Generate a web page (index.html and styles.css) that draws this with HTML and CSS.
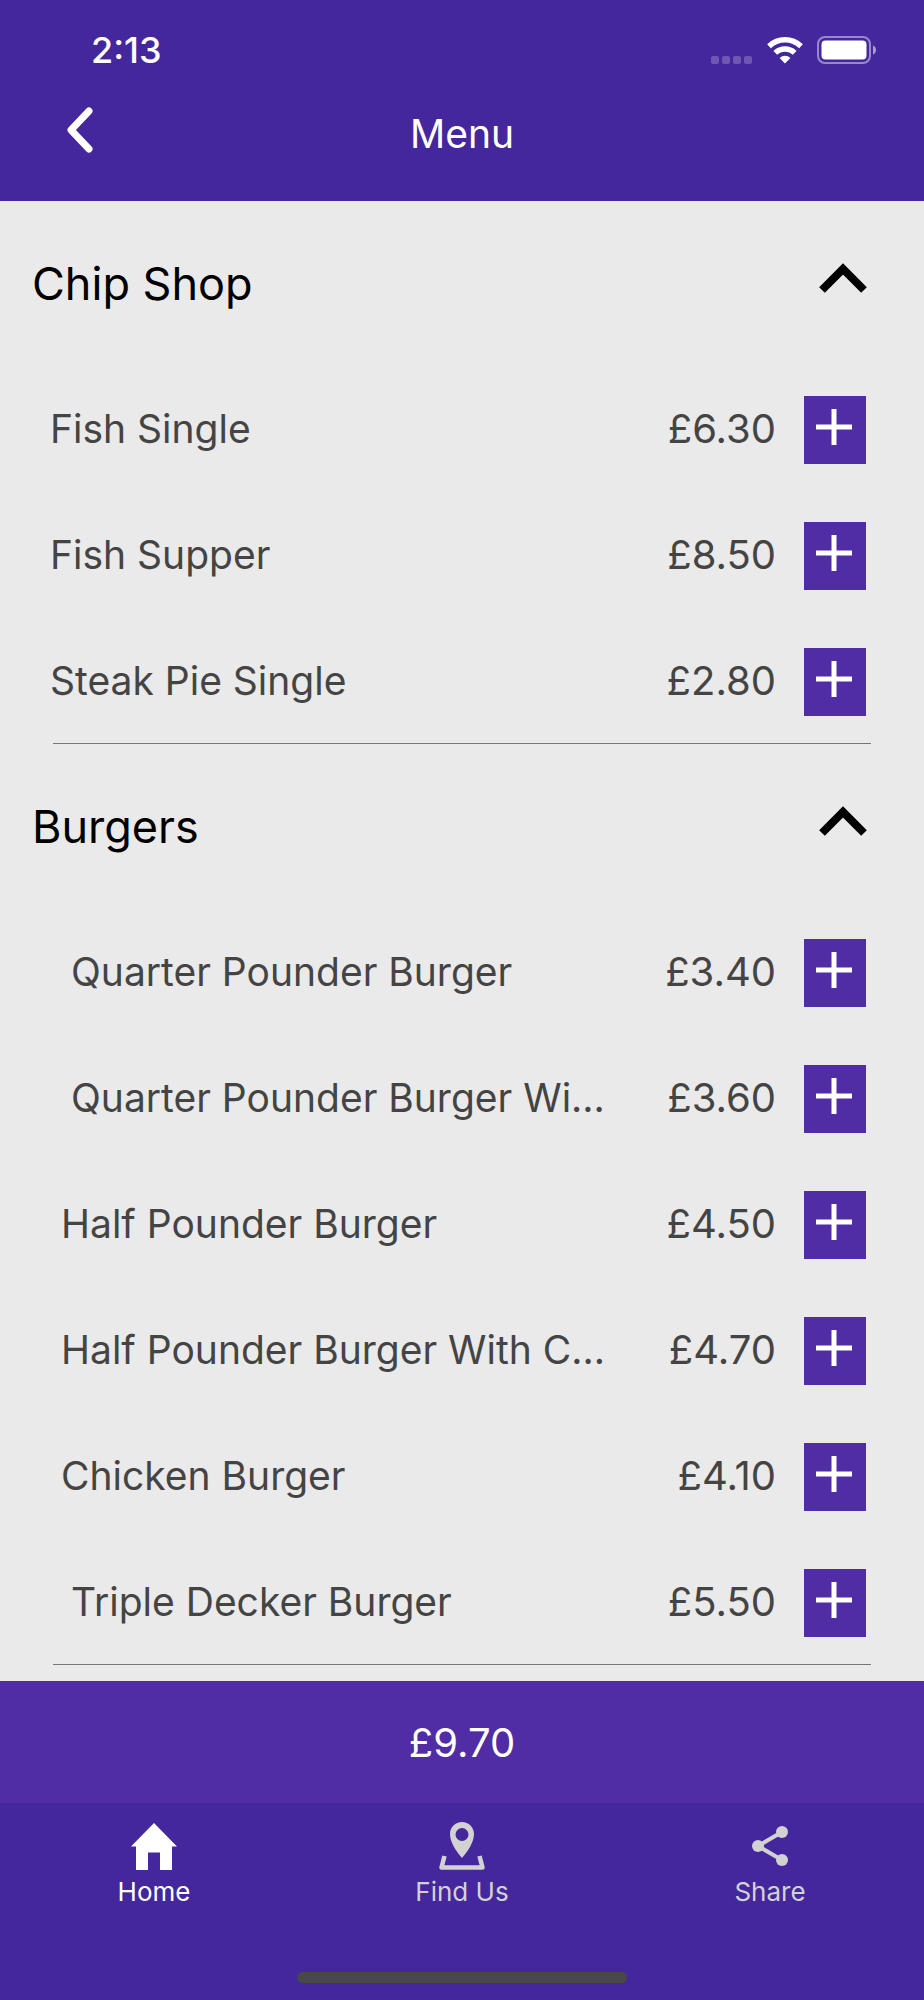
FILE: index.html
```html
<!DOCTYPE html>
<html lang="en">
<head>
<meta charset="utf-8">
<meta name="viewport" content="width=device-width, initial-scale=1">
<title>Menu</title>
<link rel="stylesheet" href="styles.css">
</head>
<body>
<svg class="sprite" aria-hidden="true">
  <symbol id="plus" viewBox="0 0 36 36"><path d="M18 0v36M0 18h36" fill="none" stroke="currentColor" stroke-width="5"/></symbol>
  <symbol id="chevron" viewBox="0 0 48 30"><path d="M3 27 24 6l21 21" fill="none" stroke="currentColor" stroke-width="8"/></symbol>
</svg>
<div class="app">
  <header class="top">
    <div class="status">
      <span class="time">2:13</span>
      <div class="indicators">
        <svg class="signal" viewBox="0 0 42 28" aria-hidden="true"><g fill="currentColor"><rect x="0" y="20" width="8" height="8" rx="2"/><rect x="11" y="20" width="8" height="8" rx="2"/><rect x="22" y="20" width="8" height="8" rx="2"/><rect x="33" y="20" width="8" height="8" rx="2"/></g></svg>
        <svg class="wifi" viewBox="0 0 36 28" aria-hidden="true"><g fill="none" stroke="currentColor" stroke-width="5.4"><path d="M2 10.200A23 23 0 0 1 34 10.200"/><path d="M8.300 16.900A14 14 0 0 1 27.700 16.900"/></g><path d="M18 27.500l-5.400-5.600a7.800 7.800 0 0 1 10.800 0z" fill="currentColor"/></svg>
        <svg class="battery" viewBox="0 0 60 28" aria-hidden="true"><rect x="1" y="1" width="52" height="26" rx="7" fill="none" stroke="currentColor" stroke-width="2" opacity=".45"/><rect x="4.500" y="4.500" width="45" height="19" rx="4" fill="currentColor"/><path d="M56 9.500c4 1.500 4 7.500 0 9z" fill="currentColor" opacity=".55"/></svg>
      </div>
    </div>
    <div class="nav">
      <button class="back" type="button" aria-label="Back"><svg viewBox="0 0 26 46" aria-hidden="true"><path d="M22 4 4 23l18 19" fill="none" stroke="currentColor" stroke-width="7" stroke-linecap="round" stroke-linejoin="round"/></svg></button>
      <h1 class="title">Menu</h1>
    </div>
  </header>

  <main class="menu">
    <section class="section">
      <div class="section-head">
        <h2 class="section-title">Chip Shop</h2>
        <button class="toggle" type="button" aria-label="Collapse Chip Shop"><svg aria-hidden="true"><use href="#chevron"/></svg></button>
      </div>
      <ul class="items">
        <li class="item"><span class="name">Fish Single</span><span class="price">£6.30</span><button class="add" type="button" aria-label="Add Fish Single"><svg aria-hidden="true"><use href="#plus"/></svg></button></li>
        <li class="item"><span class="name">Fish Supper</span><span class="price">£8.50</span><button class="add" type="button" aria-label="Add Fish Supper"><svg aria-hidden="true"><use href="#plus"/></svg></button></li>
        <li class="item"><span class="name">Steak Pie Single</span><span class="price">£2.80</span><button class="add" type="button" aria-label="Add Steak Pie Single"><svg aria-hidden="true"><use href="#plus"/></svg></button></li>
      </ul>
      <hr class="rule">
    </section>
    <section class="section">
      <div class="section-head">
        <h2 class="section-title">Burgers</h2>
        <button class="toggle" type="button" aria-label="Collapse Burgers"><svg aria-hidden="true"><use href="#chevron"/></svg></button>
      </div>
      <ul class="items">
        <li class="item indent-2"><span class="name">Quarter Pounder Burger</span><span class="price">£3.40</span><button class="add" type="button" aria-label="Add Quarter Pounder Burger"><svg aria-hidden="true"><use href="#plus"/></svg></button></li>
        <li class="item indent-2"><span class="name">Quarter Pounder Burger Wi...</span><span class="price">£3.60</span><button class="add" type="button" aria-label="Add Quarter Pounder Burger Wi..."><svg aria-hidden="true"><use href="#plus"/></svg></button></li>
        <li class="item indent-1"><span class="name">Half Pounder Burger</span><span class="price">£4.50</span><button class="add" type="button" aria-label="Add Half Pounder Burger"><svg aria-hidden="true"><use href="#plus"/></svg></button></li>
        <li class="item indent-1"><span class="name">Half Pounder Burger With C...</span><span class="price">£4.70</span><button class="add" type="button" aria-label="Add Half Pounder Burger With C..."><svg aria-hidden="true"><use href="#plus"/></svg></button></li>
        <li class="item indent-1"><span class="name">Chicken Burger</span><span class="price">£4.10</span><button class="add" type="button" aria-label="Add Chicken Burger"><svg aria-hidden="true"><use href="#plus"/></svg></button></li>
        <li class="item indent-2"><span class="name">Triple Decker Burger</span><span class="price">£5.50</span><button class="add" type="button" aria-label="Add Triple Decker Burger"><svg aria-hidden="true"><use href="#plus"/></svg></button></li>
      </ul>
      <hr class="rule">
    </section>
  </main>

  <button class="total" type="button">£9.70</button>

  <footer class="bottom">
    <nav class="tabs">
      <a class="tab active" href="#home" aria-current="page">
        <svg viewBox="0 0 48 48" aria-hidden="true"><path d="M24 1 47 24.500h-5V48H30V30.500H18V48H6V24.500H1z" fill="currentColor"/></svg>
        <span>Home</span>
      </a>
      <a class="tab" href="#find">
        <svg viewBox="0 0 48 48" aria-hidden="true"><path fill-rule="evenodd" d="M24 0c6.800 0 12 5.200 12 12 0 8-6 17-12 24C18 29 12 20 12 12 12 5.200 17.200 0 24 0zm0 6a6.500 6.500 0 1 0 0 13 6.500 6.500 0 0 0 0-13z" fill="currentColor"/><path d="M6.500 34 3.500 45.500h41L41.500 34" fill="none" stroke="currentColor" stroke-width="4.500" stroke-linejoin="round"/></svg>
        <span>Find Us</span>
      </a>
      <a class="tab" href="#share">
        <svg viewBox="0 0 48 48" aria-hidden="true"><path d="M36 10 12 24l24 14" fill="none" stroke="currentColor" stroke-width="4"/><g fill="currentColor"><circle cx="36" cy="10" r="6"/><circle cx="12" cy="24" r="6"/><circle cx="36" cy="38" r="6"/></g></svg>
        <span>Share</span>
      </a>
    </nav>
    <div class="home-bar"></div>
  </footer>
</div>
</body>
</html>
```

FILE: styles.css
```css
:root {
  --purple-dark: #44279d;
  --purple: #502ca5;
  --surface: #eaeaea;
  --text: #444;
  --muted: #d2d2d2;
}

* { box-sizing: border-box; }

body {
  margin: 0;
  background: var(--surface);
  color: var(--text);
  font-family: Inter, "Liberation Sans", sans-serif;
  font-size: 40px;
}

button {
  border: 0;
  padding: 0;
  background: none;
  color: inherit;
  font: inherit;
  cursor: pointer;
}

svg { display: block; }
.sprite { display: none; }

.app {
  display: flex;
  flex-direction: column;
  min-height: 100vh;
}

.top {
  background: var(--purple-dark);
  color: #fff;
  padding: 28px 47px 37px;
}

.status {
  display: flex;
  justify-content: space-between;
  align-items: center;
  height: 44px;
  padding-left: 44px;
}

.time {
  font-size: 36px;
  font-weight: 500;
}

.indicators {
  display: flex;
  align-items: center;
  gap: 14px;
}

.signal { width: 42px; height: 28px; opacity: .22; }
.wifi { width: 36px; height: 28px; }
.battery { width: 60px; height: 28px; }

.nav {
  display: grid;
  grid-template-columns: 46px 1fr 46px;
  align-items: end;
  height: 92px;
}

.back {
  justify-self: end;
  padding-bottom: 11px;
}
.back svg { width: 26px; height: 46px; }

.title {
  margin: 0;
  font-size: 39px;
  font-weight: 400;
  line-height: 60px;
  text-align: center;
}

.menu { flex: 1; padding-bottom: 16px; }

.section-head {
  display: flex;
  justify-content: space-between;
  align-items: flex-start;
  height: 195px;
  padding: 54px 57px 0 32px;
}

.section-title {
  margin: 0;
  color: #000;
  font-size: 45px;
  font-weight: 400;
  line-height: 58px;
}

.toggle { color: #000; padding: 8px 0; }
.toggle svg { width: 48px; height: 30px; }

.items {
  display: flex;
  flex-direction: column;
  gap: 58px;
  list-style: none;
  margin: 0;
  padding: 0 58px 27px 50px;
}

.rule {
  height: 1px;
  margin: 0 53px;
  border: 0;
  background: #777;
}

.item {
  display: flex;
  align-items: center;
  min-height: 68px;
}
.indent-1 { padding-left: 11px; }
.indent-2 { padding-left: 21px; }

.name, .price { white-space: nowrap; line-height: 48px; padding-bottom: 2px; }
.name { flex: 1; min-width: 0; font-size: 39px; }
.price { margin-right: 28px; }

.add {
  width: 62px;
  height: 68px;
  padding: 0 14px 7px 12px;
  background: var(--purple);
  color: #fff;
}
.add svg { width: 36px; height: 36px; }

.total {
  height: 122px;
  background: var(--purple);
  color: #fff;
}

.bottom {
  background: var(--purple-dark);
  padding: 19px 0 18px;
}

.tabs {
  display: grid;
  grid-template-columns: repeat(3, 1fr);
}

.tab {
  display: flex;
  flex-direction: column;
  align-items: center;
  gap: 4px;
  color: var(--muted);
  font-size: 26px;
  line-height: 36px;
  text-decoration: none;
}
.tab.active { color: #fff; }
.tab svg { width: 48px; height: 48px; }

.home-bar {
  width: 330px;
  max-width: 36%;
  height: 11px;
  margin: 62px auto 0;
  border-radius: 6px;
  background: #484848;
}
```
